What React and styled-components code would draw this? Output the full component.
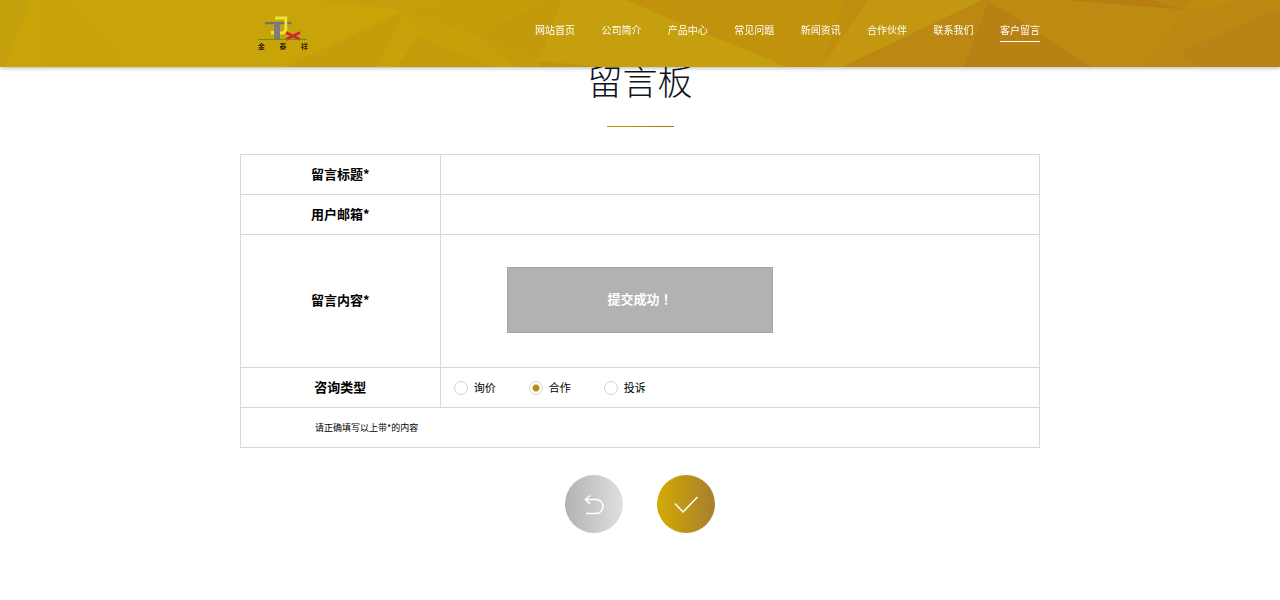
import React, { useState } from 'react'
import styled, { createGlobalStyle } from 'styled-components'

const navItems = ['网站首页', '公司简介', '产品中心', '常见问题', '新闻资讯', '合作伙伴', '联系我们', '客户留言']
const types = ['询价', '合作', '投诉']

//header facets: [points, colour]
const facets = [
    ['0,0 31,0 4,67 0,67', '#c4a00c'],
    ['31,0 70,0 127,67 44,67 44,0', '#c8a209'],
    ['315,0 445,0 405,10', '#c59f0b'],
    ['285,67 405,10 376,67', '#c59d0b'],
    ['405,10 418,37 397,67 376,67', '#c8a20a'],
    ['405,10 445,0 562,0 478,37', '#c59d0b'],
    ['418,37 498,67 397,67', '#c49b0b'],
    ['405,10 478,37 515,67 495,67 418,37', '#c6a009'],
    ['478,37 540,60 540,67 515,67', '#c49c0b'],
    ['478,37 545,0 562,0 540,60', '#c39a0b'],
    ['562,0 625,0 787,67 570,67 540,60', '#c59f0d'],
    ['540,61 605,67 540,67', '#c1960e'],
    ['625,0 843,0 822,67 787,67', '#c1930d'],
    ['843,0 868,0 822,67', '#c08e0e'],
    ['868,0 982,0 842,67 822,67', '#c3970f'],
    ['982,0 988,0 963,67 842,67', '#bc8712'],
    ['988,0 1093,67 963,67', '#b98113'],
    ['988,0 1060,0 1187,10 1138,67 1093,67', '#bd8b12'],
    ['1060,0 1155,0 1187,10', '#b97e13'],
    ['1155,0 1193,0 1187,10', '#bc8612'],
    ['1193,0 1235,0 1187,10', '#bf8c10'],
    ['1235,0 1280,0 1280,7 1178,52 1187,10', '#bc8912'],
    ['1187,10 1178,52 1200,67 1138,67', '#bc8812'],
    ['1280,7 1280,67 1200,67 1178,52', '#b98415'],
]

const App = () =>{
    const [title, setTitle] = useState("")
    const [email, setEmail] = useState("")
    const [content, setContent] = useState("")
    const [type, setType] = useState("合作")

    const reset = () =>{
        setTitle("")
        setEmail("")
        setContent("")
        setType("询价")
    }
    return(
        <>
            <GlobalStyle />
            <Header />
            <MainStyle>
                <TitleStyle>留言板</TitleStyle>
                <FormStyle onSubmit={(e)=>e.preventDefault()}>
                    <TableStyle>
                        <tbody>
                            <tr>
                                <LabelCell><label htmlFor="title">留言标题*</label></LabelCell>
                                <FieldCell>
                                    <InputStyle id="title" value={title} onChange={(e)=>setTitle(e.target.value)}/>
                                </FieldCell>
                            </tr>
                            <tr>
                                <LabelCell><label htmlFor="email">用户邮箱*</label></LabelCell>
                                <FieldCell>
                                    <InputStyle id="email" type="email" value={email} onChange={(e)=>setEmail(e.target.value)}/>
                                </FieldCell>
                            </tr>
                            <tr>
                                <LabelCell><label htmlFor="content">留言内容*</label></LabelCell>
                                <FieldCell>
                                    <TextareaStyle id="content" value={content} onChange={(e)=>setContent(e.target.value)}/>
                                </FieldCell>
                            </tr>
                            <tr>
                                <LabelCell id="type">咨询类型</LabelCell>
                                <FieldCell>
                                    <RadiosStyle role="radiogroup" aria-labelledby="type">
                                        {types.map((name) => (
                                            <RadioLabel key={name}>
                                                <RadioStyle
                                                name="type"
                                                value={name}
                                                checked={type === name}
                                                onChange={()=>setType(name)}
                                                />
                                                <span>{name}</span>
                                            </RadioLabel>
                                        ))}
                                    </RadiosStyle>
                                </FieldCell>
                            </tr>
                            <tr>
                                <NoteCell colSpan={2}>请正确填写以上带*的内容</NoteCell>
                            </tr>
                        </tbody>
                    </TableStyle>
                    <ButtonsStyle>
                        <RoundButton type="button" aria-label="重置" onClick={reset}>
                            <svg width="58" height="58" viewBox="0 0 58 58">
                                <path d="M20.5 24.5H31a7 7 0 0 1 0 14H21M25 20.5l-4.5 4 4.5 4.5"/>
                            </svg>
                        </RoundButton>
                        <RoundButton type="submit" aria-label="提交" $primary>
                            <svg width="58" height="58" viewBox="0 0 58 58">
                                <path d="M18 28.5l8 8.5 14.5-15"/>
                            </svg>
                        </RoundButton>
                    </ButtonsStyle>
                </FormStyle>
            </MainStyle>
            <ToastStyle role="status">提交成功！</ToastStyle>
        </>
    )
}

const Header = () =>{
    return(
        <HeaderStyle>
            <FacetsStyle viewBox="0 0 1280 67" preserveAspectRatio="none" aria-hidden="true">
                {facets.map(([points, fill], i) => (
                    <polygon key={i} points={points} fill={fill}/>
                ))}
            </FacetsStyle>
            <HeaderInner>
                <LogoStyle href="#" aria-label="金泰祥">
                    <svg width="50" height="25" viewBox="0 0 50 25">
                        <path d="M8 6H33.500V8.300H6z" fill="#74707c"/>
                        <path d="M17 2H27.800V13Q27.800 17.200 23 17.200H14.500V15" fill="none" stroke="#f0e337" strokeWidth="2.800"/>
                        <rect x="16" y="7" width="6" height="16.500" fill="#7d7a80"/>
                        <path d="M28 16.500L42 23.500M42 16.500L28 23.500" stroke="#cf2637" strokeWidth="2.600"/>
                        <path d="M0 23.500H49" stroke="#5d9417" strokeWidth="1"/>
                    </svg>
                    <LogoText><span>金</span><span>泰</span><span>祥</span></LogoText>
                </LogoStyle>
                <NavStyle>
                    {navItems.map((name, i) => (
                        <NavLink key={name} href="#" $active={i === navItems.length - 1}>{name}</NavLink>
                    ))}
                </NavStyle>
            </HeaderInner>
        </HeaderStyle>
    )
}


//Styled-Components-CSS
const GlobalStyle = createGlobalStyle`
    *{
        box-sizing: border-box;
    }
    body{
        margin: 0;
        background-color: white;
        color: black;
        font-family: "Noto Sans CJK SC", sans-serif;
    }
`;

const HeaderStyle = styled.header`
    position: fixed;
    top: 0;
    left: 0;
    right: 0;
    z-index: 1;
    background-color: #c9a408;
    box-shadow: 0 1px 4px rgba(0, 0, 0, 0.3);
`;

const FacetsStyle = styled.svg`
    position: absolute;
    width: 100%;
    height: 100%;
`;

const HeaderInner = styled.div`
    position: relative;
    display: flex;
    justify-content: space-between;
    max-width: 800px;
    height: 67px;
    margin: 0 auto;
`;

const LogoStyle = styled.a`
    display: block;
    width: 50px;
    margin: 16px 0 0 18px;
    color: #2a2206;
    text-decoration: none;
    svg{
        display: block;
    }
`;

const LogoText = styled.span`
    display: flex;
    justify-content: space-between;
    font-size: 7px;
    font-weight: bold;
    line-height: 10px;
`;

const NavStyle = styled.nav`
    display: flex;
    justify-content: space-between;
    align-items: flex-start;
    width: 505px;
    padding-top: 18px;
`;

const NavLink = styled.a`
    border-bottom: 1px solid ${({$active}) => $active ? 'white' : 'transparent'};
    color: white;
    font-size: 10px;
    line-height: 23px;
    text-decoration: none;
`;

const MainStyle = styled.main`
    max-width: 800px;
    margin: 0 auto;
    padding-top: 54px;
`;

const TitleStyle = styled.h1`
    margin: 0;
    color: #10131f;
    font-size: 35px;
    font-weight: 200;
    line-height: 52px;
    text-align: center;
    &::after{
        content: "";
        display: block;
        width: 67px;
        height: 1px;
        margin: 20px auto 0;
        background: linear-gradient(90deg, #c49a08, #a87410);
    }
`;

const FormStyle = styled.form`
    padding: 27px 0 40px;
`;

const TableStyle = styled.table`
    width: 100%;
    border-collapse: collapse;
    table-layout: fixed;
    td, th{
        height: 40px;
        padding: 0;
        border: 1px solid #d8d8d8;
    }
`;

const LabelCell = styled.th`
    width: 25%;
    font-size: 13px;
    font-weight: bold;
    line-height: 20px;
    text-align: center;
    && {
        padding-bottom: 2px;
    }
`;

const FieldCell = styled.td``;

const NoteCell = styled.td`
    && {
        padding-left: 74px;
    }
    font-size: 9px;
    line-height: 16px;
`;

const InputStyle = styled.input`
    display: block;
    width: 100%;
    height: 39px;
    padding: 0 13px;
    border: none;
    outline: none;
    background-color: transparent;
    font: inherit;
    font-size: 11px;
`;

const TextareaStyle = styled.textarea`
    display: block;
    width: 100%;
    height: 132px;
    padding: 13px;
    border: none;
    outline: none;
    resize: none;
    background-color: transparent;
    font: inherit;
    font-size: 11px;
`;

const RadiosStyle = styled.div`
    display: flex;
    gap: 33px;
    padding-left: 13px;
`;

const RadioLabel = styled.label`
    display: flex;
    align-items: center;
    gap: 6px;
    font-size: 11px;
    line-height: 16px;
    span{
        padding-bottom: 2px;
    }
`;

const RadioStyle = styled.input.attrs({ type: 'radio' })`
    appearance: none;
    width: 14px;
    height: 14px;
    margin: 0;
    border: 1px solid #d4d4d4;
    border-radius: 50%;
    &:checked{
        background: radial-gradient(circle, #b98d17 3px, transparent 4px);
    }
`;

const ButtonsStyle = styled.div`
    display: flex;
    justify-content: center;
    gap: 34px;
    margin-top: 27px;
`;

const RoundButton = styled.button`
    width: 58px;
    height: 58px;
    padding: 0;
    border: none;
    border-radius: 50%;
    background: ${({$primary}) => $primary
        ? 'linear-gradient(90deg, #d3aa04, #a67f2c)'
        : 'linear-gradient(90deg, #b2b2b2, #e0e0e2)'};
    cursor: pointer;
    svg{
        display: block;
        fill: none;
        stroke: white;
        stroke-width: 1.5;
    }
`;

const ToastStyle = styled.div`
    position: fixed;
    top: 50%;
    left: 50%;
    z-index: 2;
    width: 266px;
    padding: 22px 0 24px;
    transform: translate(-50%, -50%);
    border: 1px solid #a6a6a6;
    background-color: #b2b2b2;
    color: white;
    font-family: "Noto Sans CJK TC", "Noto Sans CJK SC", sans-serif;
    font-size: 13px;
    font-weight: bold;
    line-height: 18px;
    text-align: center;
`;

export default App
